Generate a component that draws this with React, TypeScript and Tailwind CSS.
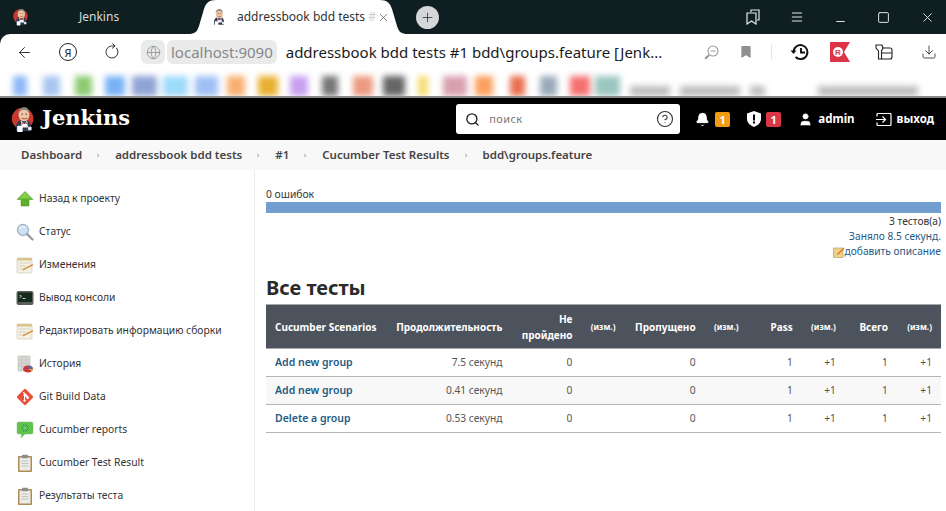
import React from "react";
import { ArrowLeft, RotateCw, Globe, Plus, X, Menu, Minus, Square, Download, Bookmark, Search, CircleHelp, Bell, User, ChevronRight } from "lucide-react";

const F = { fontFamily: '"Noto Sans", "Open Sans", sans-serif' };

function Butler({ size = 30, bg = true }: { size?: number; bg?: boolean }) {
  return (
    <svg width={size} height={size} viewBox="0 0 30 30">
      {bg && <circle cx="14" cy="14" r="12" fill="#c8392f" />}
      <path d="M7 28c-1-6 0-10 4-12h9c3 2 4 6 3 12z" fill="#2f3a55" />
      <path d="M12 16l4 4 3-4 1 8h-7z" fill="#f3f3f3" />
      <path d="M13 18l3 2 3-2v2l-3-.5-3 .5z" fill="#b8322c" />
      <ellipse cx="15.500" cy="10" rx="6" ry="7" fill="#efc6a4" />
      <path d="M9.500 8c0-5 4-6.500 6.500-6.500s5.500 2 5.500 6.500c-2-3-4-3.500-6-3.500S11 5 9.500 8z" fill="#8a8680" />
      <circle cx="13.500" cy="9" r=".8" fill="#222" />
      <circle cx="18" cy="9" r=".8" fill="#222" />
      <path d="M13 13.500c2 1 4 1 6 0" stroke="#7a4a35" strokeWidth="1" fill="none" />
      <rect x="8" y="22" width="6" height="7" rx="1" fill="#fff" />
      <rect x="20" y="23" width="4" height="4" rx="1" fill="#e8e8e8" />
    </svg>
  );
}

function Arrow() {
  return (
    <svg width="18" height="18" viewBox="0 0 18 18">
      <path d="M9 1.500 17 9.500h-4V16H5V9.500H1z" fill="#5fae2c" stroke="#4b9422" strokeWidth=".5" />
      <path d="M9 2 15 8.500H3z" fill="#86cf4d" />
    </svg>
  );
}
function Magnifier() {
  return (
    <svg width="18" height="18" viewBox="0 0 18 18">
      <circle cx="7" cy="7" r="5.500" fill="#cfe2f5" stroke="#9fb3c8" strokeWidth="1.300" />
      <path d="M3.500 6a4 3 0 0 1 6-2" stroke="#fff" strokeWidth="1" fill="none" />
      <path d="M11 11l5.500 5.500" stroke="#9b9b9b" strokeWidth="2.400" strokeLinecap="round" />
    </svg>
  );
}
function Notepad() {
  return (
    <svg width="18" height="18" viewBox="0 0 18 18">
      <rect x="1" y="2" width="15" height="15" rx="1" fill="#f4f0e2" stroke="#c9c5b6" strokeWidth=".6" />
      <rect x="1" y="2" width="15" height="2.500" fill="#d9c48a" />
      <path d="M3 7h11M3 10h7M3 13h5" stroke="#cfcbbd" strokeWidth=".8" />
      <path d="M7 13 16.500 8l.8 1.300L8 14l-1.500.5z" fill="#d98b35" />
    </svg>
  );
}
function Terminal() {
  return (
    <svg width="18" height="18" viewBox="0 0 18 18">
      <rect x=".5" y="2" width="17" height="14" rx="2" fill="#5b5f58" />
      <rect x="2" y="3.500" width="14" height="9.500" fill="#16291f" />
      <path d="M3.500 6l2 1.300-2 1.300M6.500 9.500h3" stroke="#cfe8cf" strokeWidth=".9" fill="none" />
    </svg>
  );
}
function History() {
  return (
    <svg width="18" height="18" viewBox="0 0 18 18">
      <rect x="2" y="1" width="12" height="15" fill="#d8d8d4" stroke="#b0b0ac" strokeWidth=".5" />
      <path d="M2 5h12M2 8h12M2 11h12M6 1v15M10 1v15" stroke="#b5b5b0" strokeWidth=".5" />
      <ellipse cx="12" cy="14" rx="5" ry="3.500" fill="#c9383a" />
      <path d="M12 14l5-1a5 3.500 0 0 0-4-2.500z" fill="#4a6fb8" />
      <path d="M12 14l4 2a5 3.500 0 0 0 1-2z" fill="#d9b53a" />
    </svg>
  );
}
function Git() {
  return (
    <svg width="20" height="20" viewBox="0 0 20 20">
      <rect x="3.200" y="3.200" width="13.600" height="13.600" rx="1.500" fill="#e9503a" transform="rotate(45 10 10)" />
      <path d="M8 4.500l6 6M9.500 8v6.500M9.500 8l3.500 3" stroke="#fff" strokeWidth="1.200" fill="none" />
      <circle cx="9.500" cy="7.500" r="1.300" fill="#fff" />
      <circle cx="9.500" cy="14" r="1.300" fill="#fff" />
      <circle cx="13" cy="11" r="1.300" fill="#fff" />
    </svg>
  );
}
function Cucumber() {
  return (
    <svg width="18" height="18" viewBox="0 0 18 18">
      <path d="M2.500 1h13A1.500 1.500 0 0 1 17 2.500v9a1.500 1.500 0 0 1-1.500 1.500H9l-4 4 .5-4h-3A1.500 1.500 0 0 1 1 11.500v-9A1.500 1.500 0 0 1 2.500 1z" fill="#60c44a" stroke="#8ab88a" strokeWidth=".5" />
      <circle cx="9" cy="7" r="3.700" fill="#2f9a3a" />
      <path d="M9 2.500v9M4.500 7h9M6 4l6 6M12 4l-6 6" stroke="#7fd66f" strokeWidth=".9" />
    </svg>
  );
}
function Clipboard() {
  return (
    <svg width="18" height="18" viewBox="0 0 18 18">
      <rect x="2" y="2" width="14" height="16" rx="1" fill="#b08a54" />
      <rect x="3.500" y="3.500" width="11" height="13" fill="#ecebe6" />
      <rect x="6" y=".8" width="6" height="3.400" rx=".8" fill="#8d8d8d" />
      <path d="M5.500 7h7M5.500 9.500h7M5.500 12h7" stroke="#bfbfba" strokeWidth=".9" />
    </svg>
  );
}

const side: [React.ReactNode, string][] = [
  [<Arrow />, "Назад к проекту"],
  [<Magnifier />, "Статус"],
  [<Notepad />, "Изменения"],
  [<Terminal />, "Вывод консоли"],
  [<Notepad />, "Редактировать информацию сборки"],
  [<History />, "История"],
  [<Git />, "Git Build Data"],
  [<Cucumber />, "Cucumber reports"],
  [<Clipboard />, "Cucumber Test Result"],
  [<Clipboard />, "Результаты теста"],
];

const marks = [
  ["#8db8f5", 14, 16], ["#a9c6f0", 17, 15], ["#8ccb72", 17, 13], ["#79b2f5", 20, 7], ["#8fa4d6", 25, 6], ["#9edbfb", 25, 7],
  ["#a0c0f5", 23, 9], ["#f8b070", 18, 13], ["#e8b030", 20, 12], ["#c8a0f0", 18, 14], ["#777777", 16, 15], ["#ec9a80", 20, 10],
  ["#666666", 22, 13], ["#f6dc70", 10, 15], ["#d8a0b0", 24, 8], ["#fba060", 18, 17], ["#e87050", 15, 15], ["#9aaabb", 17, 13],
  ["#f57070", 20, 5], ["#9cc6c0", 25, 5],
] as const;

const rows = [
  ["Add new group", "7.5 секунд"],
  ["Add new group", "0.41 секунд"],
  ["Delete a group", "0.53 секунд"],
];

function ChromeBar() {
  return (
    <div className="relative h-[34px] bg-[#0f1e21] flex items-center text-[#d8dcdc]">
      <svg className="absolute left-[188px] top-0" width="224" height="34" viewBox="0 0 224 34">
        <path d="M0 34c7 0 9-2 11-8l5-17C18 3 21 0 28 0h164c7 0 10 3 12 9l5 17c2 6 4 8 11 8z" fill="#ffffff" />
      </svg>
      <div className="relative flex items-center w-[195px] pl-[12px]">
        <Butler size={18} />
        <span className="ml-[49px] text-[12px] text-[#d5dada]" style={F}>Jenkins</span>
      </div>
      <div className="relative flex items-center w-[226px] pl-[15px] text-[#222]">
        <Butler size={18} bg={false} />
        <span className="ml-[9px] w-[140px] whitespace-nowrap text-[12px] text-[#333]" style={F}>addressbook bdd tests <span className="text-[#d0d0d0]">#</span></span>
        <X className="text-[#555]" size={13} strokeWidth={1.300} />
      </div>
      <div className="relative -ml-[5px] w-[23px] h-[23px] rounded-full bg-[#d4d6d8] flex items-center justify-center">
        <Plus size={15} strokeWidth={1.300} className="text-[#333]" />
      </div>
      <div className="ml-auto flex items-center pr-[11px]">
        <svg width="14" height="16" viewBox="0 0 14 16" fill="none" stroke="#e4e8e8" strokeWidth="1.200" className="mr-[30px]">
          <path d="M5 3V1h8v10h-2" />
          <path d="M1 4h9v11l-4.500-3L1 15z" />
        </svg>
        <Menu size={14} strokeWidth={1.800} className="mr-[30px] text-[#e4e8e8]" />
        <Minus size={13} strokeWidth={1.800} className="mr-[30px] mt-[9px] text-[#e4e8e8]" />
        <Square size={13} strokeWidth={1.800} className="mr-[30px] text-[#e4e8e8]" />
        <X size={15} strokeWidth={1.500} className="text-[#e4e8e8]" />
      </div>
    </div>
  );
}

function AddressBar() {
  return (
    <div className="bg-[#0f1e21]">
      <div className="h-[36px] bg-white rounded-tl-[10px] flex items-center pl-[16px]">
        <ArrowLeft size={17} strokeWidth={1.300} className="text-[#222]" />
        <div className="ml-[26px] w-[18px] h-[18px] rounded-full border border-[#222] flex items-center justify-center text-[11px] leading-none text-[#222]" style={F}>Я</div>
        <RotateCw size={16} strokeWidth={1.300} className="ml-[27px] text-[#222] -rotate-[40deg]" />
        <div className="ml-[21px] w-[24px] h-[24px] rounded-[6px] bg-[#e9eaea] flex items-center justify-center">
          <Globe size={15} strokeWidth={1.200} className="text-[#8a8a8a]" />
        </div>
        <div className="ml-[2px] h-[24px] pl-[4px] pr-[4px] rounded-[6px] bg-[#eaeaea] flex items-center text-[15px] text-[#85888a]" style={F}>localhost:9090</div>
        <span className="ml-[9px] text-[15px] text-[#1a1a1a] whitespace-nowrap" style={F}>addressbook bdd tests #1 bdd\groups.feature [Jenk...</span>
        <svg width="15" height="15" viewBox="0 0 15 15" fill="none" stroke="#9a9a9a" strokeWidth="1.100" className="ml-[42px]">
          <circle cx="9" cy="6" r="5" />
          <path d="M6.500 6h5M5.500 9.500 1 14" />
          <path d="M4.500 10.500 1.500 13.500" strokeWidth="2.200" />
        </svg>
        <Bookmark size={16} fill="#8f8f8f" strokeWidth={0} className="ml-[19px]" />
        <div className="ml-[17px] w-px h-[16px] bg-[#e4e4e4]" />
        <svg width="20" height="20" viewBox="0 0 20 20" fill="none" stroke="#111" strokeWidth="1.900" className="ml-[18px] shrink-0">
          <path d="M3.500 10a7 7 0 1 1 2 5" />
          <path d="M0.500 8.500h6L3.500 12z" fill="#111" stroke="none" />
          <path d="M11 6v4.500h4" />
        </svg>
        <svg width="20" height="20" viewBox="0 0 20 20" className="ml-[20px] shrink-0">
          <path d="M0 0h20l-6 10 6 10H0z" fill="#dc3545" />
          <circle cx="8" cy="10" r="5" fill="#fff" />
          <text x="8" y="13" textAnchor="middle" fontSize="8" fontWeight="700" fill="#dc3545" fontFamily="Liberation Sans, sans-serif">R</text>
        </svg>
        <svg width="18" height="18" viewBox="0 0 18 18" fill="none" stroke="#222" strokeWidth="1.100" className="ml-[25px] shrink-0">
          <path d="M1 2h6l1 3-1.500 3v8h-3V8L1 5z" />
          <path d="M7 5h8a2 2 0 0 1 2 2v7a2 2 0 0 1-2 2H6.500M7 10h10" />
        </svg>
        <Download size={16} strokeWidth={1.200} className="ml-[28px] shrink-0 text-[#222]" />
      </div>
    </div>
  );
}

function Bookmarks() {
  return (
    <div className="h-[26px] bg-white flex items-end pl-[13px] pr-[8px] overflow-hidden">
      <div className="flex items-end blur-[3px]">
        {marks.map(([c, w, g], i) => (
          <div key={i} className="h-[20px]" style={{ background: c, width: w, marginRight: g }} />
        ))}
        {[40, 60, 15].map((w, i) => (
          <div key={i} className="h-[10px] bg-[#bdbdbd] mr-[5px] ml-[5px]" style={{ width: w }} />
        ))}
        <div className="ml-[48px] h-[10px] w-[100px] bg-[#bdbdbd]" />
      </div>
    </div>
  );
}

function JenkinsHeader() {
  return (
    <div className="h-[44px] bg-black border-t-2 border-[#888] flex items-center pl-[10px] pr-[12px] text-white" style={F}>
      <Butler size={27} />
      <span className="ml-[5px] -mt-[3px] text-[21px] font-bold leading-none" style={{ fontFamily: '"DejaVu Serif", serif' }}>Jenkins</span>
      <div className="ml-auto h-[30px] w-[224px] bg-white rounded-[3px] flex items-center pl-[9px] pr-[6px] text-[#555]">
        <Search size={15} strokeWidth={2.200} className="text-[#222]" />
        <span className="ml-[9px] text-[11px] text-[#777] tracking-[.4px]">поиск</span>
        <CircleHelp size={18} strokeWidth={1.500} className="ml-auto text-[#333]" />
      </div>
      <Bell size={15} fill="#fff" strokeWidth={1.500} className="ml-[15px]" />
      <span className="ml-[5px] w-[15px] h-[15px] rounded-[2px] bg-[#f39c12] text-[11px] font-bold flex items-center justify-center leading-none">1</span>
      <svg width="14" height="16" viewBox="0 0 14 16" className="ml-[17px]">
        <path d="M7 0l7 2.500V8c0 3.500-3 6.500-7 8-4-1.500-7-4.500-7-8V2.500z" fill="#fff" />
        <rect x="6" y="3.500" width="2" height="6" fill="#000" />
        <rect x="6" y="10.500" width="2" height="2" fill="#000" />
      </svg>
      <span className="ml-[5px] w-[15px] h-[15px] rounded-[2px] bg-[#dc3545] text-[11px] font-bold flex items-center justify-center leading-none">1</span>
      <User size={15} fill="#fff" strokeWidth={1.500} className="ml-[17px]" />
      <span className="ml-[5px] text-[11.500px] font-bold">admin</span>
      <svg width="16" height="13" viewBox="0 0 16 13" fill="none" stroke="#fff" strokeWidth="1.200" className="ml-[21px]">
        <path d="M1 3.500V1.500a1 1 0 0 1 1-1h12a1 1 0 0 1 1 1v10a1 1 0 0 1-1 1H2a1 1 0 0 1-1-1v-2" />
        <path d="M0 6.500h9M6.500 3.500l3 3-3 3" />
      </svg>
      <span className="ml-[5px] text-[11.500px] font-bold">выход</span>
    </div>
  );
}

function Breadcrumbs() {
  const items = ["Dashboard", "addressbook bdd tests", "#1", "Cucumber Test Results"];
  return (
    <div className="h-[30px] bg-[#f8f8f8] flex items-center pl-[21px] text-[11.500px] font-semibold text-[#444]" style={F}>
      {items.map((t, i) => (
        <React.Fragment key={i}>
          <span>{t}</span>
          <ChevronRight size={9} fill="#bbb" strokeWidth={0} className="mx-[12px] text-[#bbb]" />
        </React.Fragment>
      ))}
      <span>bdd\groups.feature</span>
    </div>
  );
}

function Sidebar() {
  return (
    <div className="w-[255px] shrink-0 border-r border-[#eeeeee] pt-[12px] pl-[16px] h-full overflow-hidden" style={F}>
      {side.map(([icon, label], i) => (
        <div key={i} className="h-[33px] flex items-center">
          <div className="w-[18px] flex justify-center">{icon}</div>
          <span className="ml-[5px] text-[10.300px] text-[#333] whitespace-nowrap">{label}</span>
        </div>
      ))}
    </div>
  );
}

const colW = [125, 245 - 125, 70, 43, 80, 43, 54, 43, 52, 44];

function Main() {
  const head = ["Cucumber Scenarios", "Продолжительность", "Не пройдено", "(изм.)", "Пропущено", "(изм.)", "Pass", "(изм.)", "Всего", "(изм.)"];
  return (
    <div className="flex-1 pl-[11px] pr-[5px] pt-[17px] min-w-0" style={F}>
      <div className="text-[10.300px] leading-[15px] text-[#333]">0 ошибок</div>
      <div className="h-[11px] bg-[#729fcf]" />
      <div className="text-right text-[10.200px] leading-[15px] text-[#333] mt-[1px]">3 тестов(а)</div>
      <div className="text-right text-[10.200px] leading-[15px] text-[#1f5a84]">Заняло 8.5 секунд.</div>
      <div className="flex justify-end items-center text-[10.200px] leading-[15px] text-[#1f5a84]">
        <svg width="12" height="12" viewBox="0 0 12 12">
          <rect x="0.500" y="2" width="9.500" height="9.500" fill="#ecd28a" stroke="#a89868" strokeWidth=".6" />
          <path d="M4 8 10.500 1.500 11.500 2.500 5 9z" fill="#d97b2b" />
        </svg>
        <span>добавить описание</span>
      </div>
      <h2 className="text-[20px] font-bold text-[#2b2b2b] leading-[26px] mt-[16px] mb-[3px]">Все тесты</h2>
      <table className="w-full table-fixed border-collapse text-[10.200px]">
        <colgroup>
          {colW.map((w, i) => (
            <col key={i} style={{ width: w }} />
          ))}
        </colgroup>
        <thead>
          <tr className="h-[44px] bg-[#4d535c] text-white border-t border-b border-[#a8a8a8]">
            {head.map((h, i) => {
              const small = h === "(изм.)";
              return (
                <th key={i} className={`${i === 0 ? "text-left pl-[9px] whitespace-nowrap" : "text-right pr-[9px]"} ${small ? "text-[8.300px]" : "text-[10px]"} ${i === 1 ? "whitespace-nowrap" : ""} font-bold leading-[16px] p-0`}>
                  {h}
                </th>
              );
            })}
          </tr>
        </thead>
        <tbody>
          {rows.map((r, i) => (
            <tr key={i} className={`h-[28px] border-b border-[#b5b5b5] ${i === 1 ? "bg-[#f8f8f8]" : "bg-white"} text-[#555]`}>
              <td className="pl-[9px] font-semibold text-[10.500px] text-[#1f5a84]">{r[0]}</td>
              <td className="text-right pr-[9px]">{r[1]}</td>
              {["0", "", "0", "", "1", "+1", "1", "+1"].map((v, j) => (
                <td key={j} className="text-right pr-[9px]">{v}</td>
              ))}
            </tr>
          ))}
        </tbody>
      </table>
    </div>
  );
}

export default function App() {
  return (
    <div className="w-[946px] h-[511px] overflow-hidden bg-white flex flex-col">
      <ChromeBar />
      <AddressBar />
      <Bookmarks />
      <JenkinsHeader />
      <Breadcrumbs />
      <div className="flex-1 flex min-h-0">
        <Sidebar />
        <Main />
      </div>
    </div>
  );
}
